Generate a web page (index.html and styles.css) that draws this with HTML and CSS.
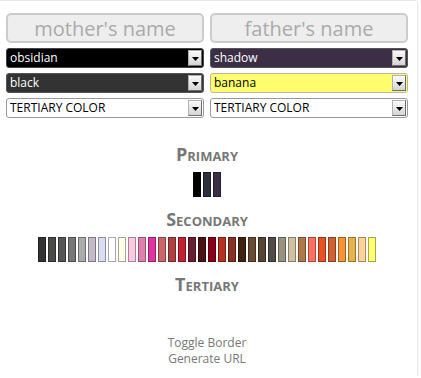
FILE: index.html
```html
<!DOCTYPE html>
<html lang="en">
<head>
    <meta charset="UTF-8">
    <meta name="viewport" content="width=device-width, initial-scale=1.0">
    <title>Color Breeding</title>
    <link rel="stylesheet" href="styles.css">
</head>
<body>
    <div class="card">
        <div class="parents">
            <div class="parent">
                <input class="name" type="text" placeholder="mother's name">
                <div class="pick"><select class="obsidian"><option>obsidian</option></select></div>
                <div class="pick"><select class="black"><option>black</option></select></div>
                <div class="pick"><select class="plain"><option>TERTIARY COLOR</option></select></div>
            </div>
            <div class="parent">
                <input class="name" type="text" placeholder="father's name">
                <div class="pick"><select class="shadow"><option>shadow</option></select></div>
                <div class="pick"><select class="banana"><option>banana</option></select></div>
                <div class="pick"><select class="plain"><option>TERTIARY COLOR</option></select></div>
            </div>
        </div>

        <div class="palette">
            <h3>Primary</h3>
            <div class="swatches">
                <span class="swatch" style="background:#000000"></span>
                <span class="swatch" style="background:#2c2f3c"></span>
                <span class="swatch" style="background:#3c2f45"></span>
            </div>
        </div>

        <div class="palette">
            <h3>Secondary</h3>
            <div class="swatches">
                <span class="swatch" style="background:#333333"></span>
                <span class="swatch" style="background:#4a4a47"></span>
                <span class="swatch" style="background:#555555"></span>
                <span class="swatch" style="background:#777777"></span>
                <span class="swatch" style="background:#ababab"></span>
                <span class="swatch" style="background:#c5b9c9"></span>
                <span class="swatch" style="background:#d9ddf1"></span>
                <span class="swatch" style="background:#ffffff"></span>
                <span class="swatch" style="background:#fffde8"></span>
                <span class="swatch" style="background:#fcc9e5"></span>
                <span class="swatch" style="background:#e07fb1"></span>
                <span class="swatch" style="background:#e033a0"></span>
                <span class="swatch" style="background:#cc6668"></span>
                <span class="swatch" style="background:#b03f40"></span>
                <span class="swatch" style="background:#c42230"></span>
                <span class="swatch" style="background:#6a2030"></span>
                <span class="swatch" style="background:#4a1212"></span>
                <span class="swatch" style="background:#880018"></span>
                <span class="swatch" style="background:#b83020"></span>
                <span class="swatch" style="background:#883022"></span>
                <span class="swatch" style="background:#402210"></span>
                <span class="swatch" style="background:#6a4a32"></span>
                <span class="swatch" style="background:#584232"></span>
                <span class="swatch" style="background:#504a48"></span>
                <span class="swatch" style="background:#999281"></span>
                <span class="swatch" style="background:#d1c1a2"></span>
                <span class="swatch" style="background:#b07849"></span>
                <span class="swatch" style="background:#ff7060"></span>
                <span class="swatch" style="background:#e85222"></span>
                <span class="swatch" style="background:#d06232"></span>
                <span class="swatch" style="background:#f89232"></span>
                <span class="swatch" style="background:#e8b24a"></span>
                <span class="swatch" style="background:#ffd29a"></span>
                <span class="swatch" style="background:#ffff72"></span>
            </div>
        </div>

        <div class="palette">
            <h3>Tertiary</h3>
            <div class="swatches"></div>
        </div>

        <div class="links">
            <a href="#">Toggle Border</a>
            <a href="#">Generate URL</a>
        </div>
    </div>
</body>
</html>
```

FILE: styles.css
```css
body {
    margin: 0;
    font-family: "Open Sans", Arial, sans-serif;
    background: #ffffff;
}
.card {
    width: 417px;
    height: 375px;
    margin-top: 1px;
    box-sizing: border-box;
    padding: 12px 9px 0 6px;
    box-shadow: 0 0 2px rgba(0, 0, 0, 0.3);
}
.parents {
    display: grid;
    grid-template-columns: 198px 198px;
    column-gap: 6px;
}
.parent {
    display: flex;
    flex-direction: column;
    gap: 5px;
}
.name {
    height: 30px;
    box-sizing: border-box;
    margin: 0;
    padding: 0 4px;
    border: 2px solid #cccccc;
    border-radius: 5px;
    background: #eeeeee;
    font-family: "Open Sans", Arial, sans-serif;
    font-size: 20px;
    text-align: center;
    color: #999999;
}
.name::placeholder {
    color: #aaaaaa;
    opacity: 1;
}
.pick {
    position: relative;
    height: 20px;
}
.pick select {
    display: block;
    appearance: none;
    -webkit-appearance: none;
    width: 100%;
    height: 20px;
    box-sizing: border-box;
    margin: 0;
    padding: 0 20px 0 3px;
    border: 1px solid #999999;
    border-radius: 3px;
    font-family: "Open Sans", Arial, sans-serif;
    font-size: 12px;
    line-height: 18px;
    color: #000000;
    background: #ffffff;
}
/* the little arrow button on the right */
.pick::after {
    content: "";
    position: absolute;
    top: 2px;
    right: 2px;
    width: 14px;
    height: 16px;
    box-sizing: border-box;
    border: 1px solid #8a8a8a;
    border-color: #b0b0b0 #6e6e6e #6e6e6e #b0b0b0;
    background:
        url("data:image/svg+xml,%3Csvg xmlns='http://www.w3.org/2000/svg' width='7' height='4'%3E%3Cpath d='M0 0h7L3.5 4z' fill='%23000'/%3E%3C/svg%3E") center 6px no-repeat,
        linear-gradient(#fafafa, #d4d4d4);
    pointer-events: none;
}
.pick .obsidian {
    background: #000000;
    border-color: #444444;
    color: #ffffff;
}
.pick .black {
    background: #333333;
    border-color: #555555;
    color: #ffffff;
}
.pick .shadow {
    background: #3c2f45;
    border-color: #555555;
    color: #ffffff;
}
.pick .banana {
    background: #fdfd6e;
    border-color: #b8b8a0;
}
.palette {
    margin-top: 26px;
    text-align: center;
}
.palette + .palette {
    margin-top: 12px;
}
.palette h3 {
    margin: 0 0 8px;
    font-size: 18px;
    line-height: 20px;
    font-weight: bold;
    font-variant: small-caps;
    color: #777777;
}
.swatches {
    display: flex;
    justify-content: center;
    gap: 2px;
    height: 25px;
}
.swatch {
    width: 8px;
    height: 25px;
    box-shadow: inset 0 0 0 1px rgba(0, 0, 0, 0.35);
}
.links {
    margin-top: 8px;
    display: flex;
    flex-direction: column;
    align-items: center;
}
.links a {
    font-size: 12px;
    line-height: 16px;
    color: #777777;
    text-decoration: none;
}
```
